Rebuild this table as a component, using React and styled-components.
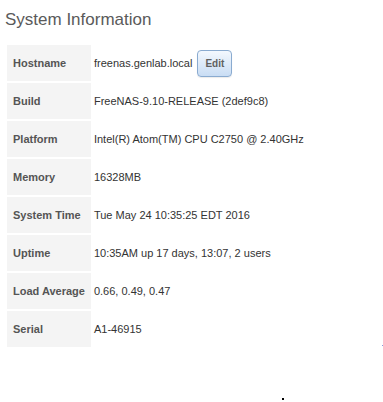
import React from "react";
import styled, { createGlobalStyle } from "styled-components";

const Global = createGlobalStyle`
  html, body { margin: 0; padding: 0; background: #fff; }
  body { font-family: "Liberation Sans", Arial, sans-serif; }
`;

const Page = styled.div`
  position: relative;
  width: 383px;
  height: 402px;
  padding: 10px 5px 0 5px;
  box-sizing: border-box;
`;

const Title = styled.h1`
  margin: 0 0 13px 0;
  font-size: 17px;
  line-height: 20px;
  font-weight: normal;
  color: #5a5a5a;
`;

const Grid = styled.div`
  display: grid;
  grid-template-columns: auto 1fr;
  gap: 2px;
  padding: 2px;
`;

const Label = styled.div`
  height: 36px;
  display: flex;
  align-items: center;
  padding: 0 6px;
  background: #f4f4f4;
  font-size: 11px;
  font-weight: bold;
  color: #555;
  white-space: nowrap;
`;

const Value = styled.div`
  height: 36px;
  display: flex;
  align-items: center;
  padding-left: 1px;
  font-size: 11px;
  color: #333;
  white-space: nowrap;
`;

const EditButton = styled.button`
  margin-left: 5px;
  width: 35px;
  height: 27px;
  padding: 0;
  border: 1px solid #8aabd0;
  border-radius: 4px;
  background: linear-gradient(to bottom, #f3f8fe 0%, #dce9f8 55%, #c9ddf4 100%);
  font-family: "Liberation Sans", Arial, sans-serif;
  font-size: 10px;
  font-weight: bold;
  color: #606060;
  box-shadow: 0 1px 1px rgba(0, 0, 0, 0.08);
`;

const Dot = styled.div`
  position: absolute;
  left: ${(p) => p.x}px;
  top: ${(p) => p.y}px;
  width: ${(p) => p.s}px;
  height: ${(p) => p.s}px;
  background: ${(p) => p.c};
`;

const rows = [
  ["Hostname", "freenas.genlab.local", true],
  ["Build", "FreeNAS-9.10-RELEASE (2def9c8)"],
  ["Platform", "Intel(R) Atom(TM) CPU C2750 @ 2.40GHz"],
  ["Memory", "16328MB"],
  ["System Time", "Tue May 24 10:35:25 EDT 2016"],
  ["Uptime", "10:35AM up 17 days, 13:07, 2 users"],
  ["Load Average", "0.66, 0.49, 0.47"],
  ["Serial", "A1-46915"],
];

export default function App() {
  return (
    <Page>
      <Global />
      <Title>System Information</Title>
      <Grid>
        {rows.map(([k, v, edit]) => (
          <React.Fragment key={k}>
            <Label>{k}</Label>
            <Value>
              {v}
              {edit && <EditButton>Edit</EditButton>}
            </Value>
          </React.Fragment>
        ))}
      </Grid>
      <Dot x={282} y={398} s={2} c="#000" />
      <Dot x={382} y={345} s={1} c="#8899dd" />
    </Page>
  );
}
